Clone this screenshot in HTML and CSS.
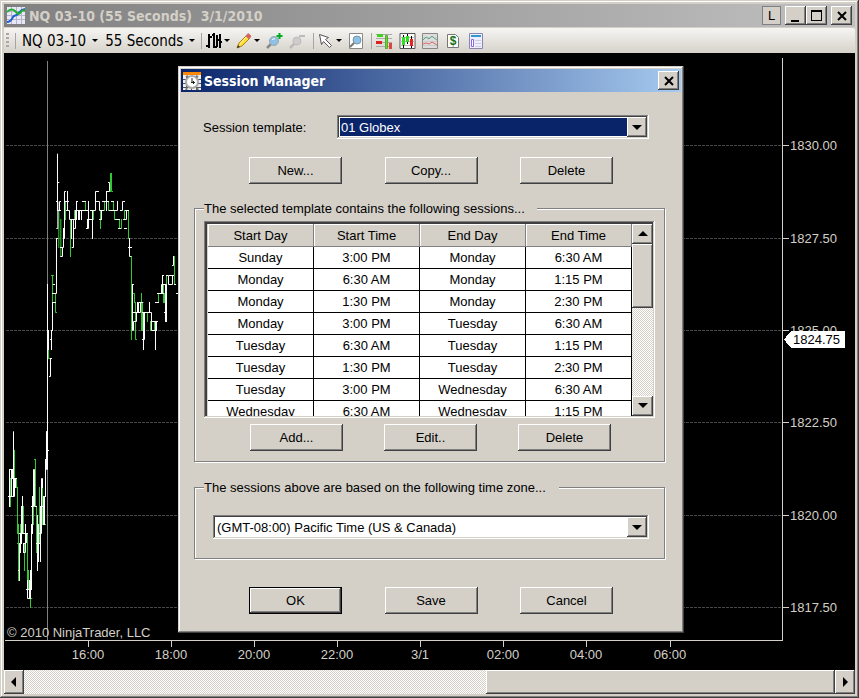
FILE: index.html
```html
<!DOCTYPE html>
<html lang="en">
<head>
<meta charset="utf-8">
<title>NQ 03-10 (55 Seconds) 3/1/2010</title>
<link rel="stylesheet" href="styles.css">
</head>
<body>
<div class="window">
  <header class="titlebar">
    <svg class="app-icon" width="18" height="17" viewBox="0 0 18 17" aria-hidden="true">
      <rect width="18" height="17" fill="#e8e8f4"/>
      <path d="M0 4.500h18M0 8.500h18M0 12.500h18M4.500 0v17M9.500 0v17M14.500 0v17" stroke="#b4b4cc" fill="none"/>
      <path d="M0 15c4 0 5-3 6-5s3-1 5-3 2-4 7-5" stroke="#2060d0" stroke-width="2" fill="none"/>
      <path d="M0 5c3-3 6-3 8-1s3 4 5 2 2-4 5-2" stroke="#20b030" stroke-width="2" fill="none"/>
    </svg>
    <h1 class="title">NQ 03-10 (55 Seconds)&nbsp; 3/1/2010</h1>
    <div class="caption-buttons">
      <button class="link-button" type="button">L</button>
      <span class="caption-pair">
        <button class="caption-button" type="button" aria-label="Minimize"><svg width="16" height="14" viewBox="0 0 16 14"><path d="M3 11h8v2H3z"/></svg></button>
        <button class="caption-button" type="button" aria-label="Maximize"><svg width="16" height="14" viewBox="0 0 16 14"><path d="M2 1h11v11H2zM3 3v8h9V3z" fill-rule="evenodd"/></svg></button>
      </span>
      <button class="caption-button" type="button" aria-label="Close"><svg width="16" height="14" viewBox="0 0 16 14"><path d="M4 3l8 8M12 3l-8 8" stroke="#000" stroke-width="2"/></svg></button>
    </div>
  </header>

  <nav class="toolbar" aria-label="Chart tools">
    <span class="grip"></span>
    <span class="separator"></span>
    <button class="tool tool-text" type="button">NQ 03-10<span class="caret"></span></button>
    <button class="tool tool-text" type="button">55 Seconds<span class="caret"></span></button>
    <span class="separator"></span>
    <button class="tool" type="button" aria-label="Chart style">
      <svg width="16" height="18" viewBox="0 0 16 18"><path d="M3 2v14M0 14h3M3 5h3M8 1v15M8 3H6M8 15h3M11 3v12M14 2v14M12 8h2M14 10h2" stroke="#000" stroke-width="2" fill="none"/></svg><span class="caret"></span>
    </button>
    <button class="tool" type="button" aria-label="Drawing tools">
      <svg width="16" height="18" viewBox="0 0 16 18"><path d="M1 16l2-5 8-8 3 3-8 8z" fill="#fd3" stroke="#b08020"/><path d="M4 12l7-8" stroke="#fff29a"/><path d="M10 4l2-2.500 3 2.500-2 3z" fill="#e55" stroke="#b77"/><path d="M1 16l1-3 2 2z" fill="#333"/></svg><span class="caret"></span>
    </button>
    <button class="tool" type="button" aria-label="Zoom in">
      <svg width="17" height="18" viewBox="0 0 17 18"><path d="M1 16l5-5" stroke="#888" stroke-width="2.500"/><circle cx="8" cy="9" r="4.500" fill="#8fc0e8" stroke="#9aa"/><path d="M6 8q1-2 3-1" stroke="#fff" fill="none"/><path d="M13.500 1v6M10.500 4h6" stroke="#0a2" stroke-width="2"/></svg>
    </button>
    <button class="tool" type="button" aria-label="Zoom out">
      <svg width="17" height="18" viewBox="0 0 17 18"><path d="M1 16l5-5" stroke="#bbb" stroke-width="2.500"/><circle cx="8" cy="9" r="4" fill="#ccc" stroke="#bbb"/><path d="M10 4h6" stroke="#bbb" stroke-width="2"/></svg>
    </button>
    <span class="separator"></span>
    <button class="tool" type="button" aria-label="Pointer">
      <svg width="16" height="18" viewBox="0 0 16 18"><path d="M1.500 2.500l9 3-3 2 6 6-2 2-6-6-2 3z" fill="#fff" stroke="#555"/></svg><span class="caret"></span>
    </button>
    <button class="tool" type="button" aria-label="Preview">
      <svg width="16" height="18" viewBox="0 0 16 18"><path d="M1.500 1.500h13v15h-13z" fill="#fff" stroke="#888"/><circle cx="9" cy="8" r="4" fill="#8fc0e8" stroke="#799"/><path d="M6 11l-4 4" stroke="#777" stroke-width="2"/></svg>
    </button>
    <span class="separator"></span>
    <button class="tool" type="button" aria-label="Market depth">
      <svg width="17" height="18" viewBox="0 0 17 18"><path d="M0 2.500h16M0 6.500h16M0 10.500h16M0 14.500h16" stroke="#aaa"/><path d="M1 2h6v3H1z" fill="#4c2"/><path d="M0 9h6v3H0z" fill="#d22"/><path d="M9.500 3.500h2v13h-2z" fill="#6d2" stroke="#5a3"/><path d="M13 11h3v6h-3z" fill="#d44"/></svg>
    </button>
    <button class="tool" type="button" aria-label="Candlesticks">
      <svg width="17" height="18" viewBox="0 0 17 18"><path d="M1 1.500h15v15H1z" fill="#fff" stroke="#555"/><path d="M1 5.500h15M1 9.500h15M1 13.500h15" stroke="#bbb"/><path d="M4.500 3v13M8.500 2v10M12.500 4v12" stroke="#000"/><path d="M3 5h3v8H3zM7 4h3v6H7z" fill="#3d2"/><path d="M11 7h3v7h-3z" fill="#e22"/></svg>
    </button>
    <button class="tool" type="button" aria-label="Indicators">
      <svg width="17" height="18" viewBox="0 0 17 18"><path d="M.5 1.500h15v15H.5z" fill="#ddd" stroke="#888"/><path d="M1 5.500h14M1 9.500h14M1 13.500h14" stroke="#ccc"/><path d="M1 8l3-3 3 2 3-3 2 2 3 2" stroke="#5a8" fill="none"/><path d="M1 12l3-1 3 1 3-2 5 3" stroke="#d66" fill="none"/></svg>
    </button>
    <button class="tool" type="button" aria-label="Account">
      <svg width="17" height="18" viewBox="0 0 17 18"><path d="M2.500 2.500h8l3 3v10h-11z" fill="#fff" stroke="#777"/><text class="dollar" x="8" y="13">$</text></svg>
    </button>
    <button class="tool" type="button" aria-label="Properties">
      <svg width="16" height="18" viewBox="0 0 16 18"><path d="M1.500 1.500h13v15h-13z" fill="#eef" stroke="#88a"/><path d="M3 3h10v2H3z" fill="#39c"/><path d="M3.500 7.500h2v7h-2z" fill="#fff" stroke="#86e"/><path d="M7 8.500h6M7 11.500h6M7 14.500h6" stroke="#ccd"/></svg>
    </button>
  </nav>

  <main class="workspace">
    <svg class="chart" viewBox="4 53 851 617" preserveAspectRatio="xMinYMin meet" role="img" aria-label="NQ 03-10 price chart">
      <g class="gridlines">
        <path d="M6 145.500H782M6 238.500H782M6 330.500H782M6 422.500H782M6 515.500H782M6 607.500H782"/>
      </g>
      <path class="session-line" d="M47.500 61V640"/>
      <g class="bars" transform="translate(.167 140.167) scale(.33333)">
        <path class="down" d="M176 211V322M182 238V349M196 184V238M211 238V349M223 211V238M256 184V211M280 211V238M301 211V265M313 184V211M325 184V211M331 100V154M334 100V154h3M340 184V211M343 211V238M358 238V265M364 238V265M373 211V238M385 211V295M394 349V598M397 460h6V487M406 487V598h3M424 460V571M427 487V571M442 517V544M451 544V571M463 544V571M475 460V487M490 433V487M493 460V487M499 406V433M523 349V433M157 406V487M154 406h6M166 460V517h3M145 628V655M148 655h3"/>
        <path class="up" d="M172 42V211M175 127h1M169 184h4V265h-3M169 295V460h-12M169 295h3M178 211V184h3M175 211h6M190 265V322h-9M187 322V349h-5M190 295h3V154h3M196 184h9M202 154V211M199 211h9V238h15M220 238V322h-4M214 238V295M226 211V265h-6M229 184V238M229 184h3M226 211h15M235 211V238M238 211V238M244 211V238M244 211h12M247 184h9M259 211h6M265 184V265h-6M262 238V265M262 238h15M277 211V295M271 211h15V154h9M289 184h9V211h12M304 211V238M298 238h6M307 184h6M319 154V211M319 154h9V127h-3M316 184h9M328 211h12M334 184h6M343 211h9V184M346 238h12M355 265h6M361 211h6V184h6M373 265h6M379 211V238H370M376 211h9M388 295V349h4M385 322h9M397 433V571h3V544h9V517M397 433h3M397 517h12M412 487V517h3V487h-3M421 487V517h-9M418 487h10M430 517V628M427 598h6V517M427 517h27V571h15M448 487V517M436 517h6M454 544h18M469 544V571M466 544V628M466 487h9M472 460h12V433h3V406h3M484 460h6M487 406V460M487 433h12V544M496 433V544M493 517h6M499 406h6V433h12V406h3M508 406h9M520 349V376h-3M523 433h3M529 460h3M142 433V720M145 571V628M142 571h3M154 571V628M151 598h3M157 487V571M157 487h9M160 433h3M157 460h9M151 655V709h-3M151 655h3"/>
      </g>
      <g class="bars" transform="translate(.167 380.167) scale(.33333)">
        <path class="down" d="M43 211V295M31 295V379M49 295V322M52 322V460M55 433V601M61 433V517M52 490h9M70 379V460M73 490V571M82 460V601M85 571V628M91 628V682M94 655h1M100 322V433M106 238V379M103 238h3M109 379V517M118 322V490M127 322V433M130 433h6M28 295h3"/>
        <path class="up" d="M40 155V349M28 268V379M28 268h12M25 349h15M34 268V349M37 268V295M43 295V349h-3M46 295V322M46 295h3M58 490V601M55 571h3M61 460V517M64 379V490M67 349V460M58 460h18V433M76 433V517h-6M70 490V517M70 490h6M79 460V487M76 460h6M82 601V655h9V571M88 601V655M79 628h12M94 433V628M94 571V628M97 349V460M94 379h6V268h3V379h6M112 406V571M115 433V544M109 490h12M121 379V544M115 460h9V295h3V322M121 379h12V433M130 349V433M133 349V433M133 349h3V238h3V155M136 238V349M139 155V268h3V0M142 211h3"/>
      </g>
      <path class="axis" d="M5 640.500H782.500V58M782 145.500h7M782 238.500h7M782 330.500h7M782 422.500h7M782 515.500h7M782 607.500h7M88.500 640v7M171.500 640v7M254.500 640v7M337.500 640v7M420.500 640v7M503.500 640v7M586.500 640v7M670.500 640v7"/>
      <g class="axis-label">
        <text x="790" y="150">1830.00</text>
        <text x="790" y="243">1827.50</text>
        <text x="790" y="335">1825.00</text>
        <text x="790" y="427">1822.50</text>
        <text x="790" y="520">1820.00</text>
        <text x="790" y="612">1817.50</text>
        <text x="7" y="637">© 2010 NinjaTrader, LLC</text>
      </g>
      <g class="axis-label time-label">
        <text x="88" y="659">16:00</text>
        <text x="171" y="659">18:00</text>
        <text x="254" y="659">20:00</text>
        <text x="337" y="659">22:00</text>
        <text x="420" y="659">3/1</text>
        <text x="503" y="659">02:00</text>
        <text x="586" y="659">04:00</text>
        <text x="670" y="659">06:00</text>
      </g>
      <path d="M784 339.500l7-8.500h54v17h-54z" fill="#fff"/>
      <text class="price-marker" x="793" y="344">1824.75</text>
    </svg>
  </main>

  <div class="scrollbar scrollbar-h" aria-hidden="true">
    <span class="scroll-button"><svg width="8" height="10" viewBox="0 0 8 10"><path d="M6 0v10L1 5z"/></svg></span>
    <span class="scroll-track"><span class="scroll-thumb"></span></span>
    <span class="scroll-button"><svg width="8" height="10" viewBox="0 0 8 10"><path d="M2 0v10l5-5z"/></svg></span>
  </div>
</div>

<section class="dialog" role="dialog" aria-labelledby="dialog-title">
  <header class="dialog-titlebar">
    <svg width="18" height="18" viewBox="0 0 18 18" aria-hidden="true">
      <rect width="18" height="18" fill="#eee"/>
      <path d="M0 7.500h18M0 11.500h18M0 15.500h18M3.500 4v14M8.500 4v14M13.500 4v14" stroke="#555"/>
      <rect width="18" height="3" fill="#f80"/>
      <circle cx="9" cy="10" r="6" fill="#fff" stroke="#aaa" stroke-width="2"/>
      <path d="M9 6v5M8 10.500h4M10.500 9v3" stroke="#222" fill="none"/>
      <path d="M4 16l-1 2M14 16l1 2M3 5l2-1M15 5l-2-1" stroke="#777" stroke-width="2"/>
    </svg>
    <h2 class="title" id="dialog-title">Session Manager</h2>
    <button class="caption-button" type="button" aria-label="Close"><svg width="16" height="14" viewBox="0 0 16 14"><path d="M4 3l8 8M12 3l-8 8" stroke="#000" stroke-width="2"/></svg></button>
  </header>

  <form class="dialog-body">
    <div class="template-row">
      <label for="template">Session template:</label>
      <span class="combo combo-selected">
        <select id="template"><option>01 Globex</option></select>
        <span class="combo-arrow"></span>
      </span>
    </div>

    <div class="button-row">
      <button class="button" type="button">New...</button>
      <button class="button" type="button">Copy...</button>
      <button class="button" type="button">Delete</button>
    </div>

    <fieldset class="group group-sessions">
      <legend class="legend-sessions">The selected template contains the following sessions...</legend>
      <div class="grid-box">
        <div class="grid-view">
          <table class="sessions">
            <thead>
              <tr><th>Start Day</th><th>Start Time</th><th>End Day</th><th>End Time</th></tr>
            </thead>
            <tbody>
              <tr><td>Sunday</td><td>3:00 PM</td><td>Monday</td><td>6:30 AM</td></tr>
              <tr><td>Monday</td><td>6:30 AM</td><td>Monday</td><td>1:15 PM</td></tr>
              <tr><td>Monday</td><td>1:30 PM</td><td>Monday</td><td>2:30 PM</td></tr>
              <tr><td>Monday</td><td>3:00 PM</td><td>Tuesday</td><td>6:30 AM</td></tr>
              <tr><td>Tuesday</td><td>6:30 AM</td><td>Tuesday</td><td>1:15 PM</td></tr>
              <tr><td>Tuesday</td><td>1:30 PM</td><td>Tuesday</td><td>2:30 PM</td></tr>
              <tr><td>Tuesday</td><td>3:00 PM</td><td>Wednesday</td><td>6:30 AM</td></tr>
              <tr><td>Wednesday</td><td>6:30 AM</td><td>Wednesday</td><td>1:15 PM</td></tr>
            </tbody>
          </table>
        </div>
        <div class="scrollbar scrollbar-v" aria-hidden="true">
          <span class="scroll-button"><svg width="10" height="6" viewBox="0 0 10 6"><path d="M5 0l5 5H0z"/></svg></span>
          <span class="scroll-track"><span class="scroll-thumb"></span></span>
          <span class="scroll-button"><svg width="10" height="6" viewBox="0 0 10 6"><path d="M0 0h10L5 5z"/></svg></span>
        </div>
      </div>
      <div class="button-row group-buttons">
        <button class="button" type="button">Add...</button>
        <button class="button" type="button">Edit..</button>
        <button class="button" type="button">Delete</button>
      </div>
    </fieldset>

    <fieldset class="group group-zone">
      <legend class="legend-zone"><label for="zone">The sessions above are based on the following time zone...</label></legend>
      <div class="combo">
        <select id="zone"><option>(GMT-08:00) Pacific Time (US &amp; Canada)</option></select>
        <span class="combo-arrow"></span>
      </div>
    </fieldset>

    <div class="button-row">
      <button class="button button-default" type="button">OK</button>
      <button class="button" type="button">Save</button>
      <button class="button" type="button">Cancel</button>
    </div>
  </form>
</section>
</body>
</html>
```
FILE: styles.css
```css
:root {
  --face: #d4d0c8;
  --shadow: #808080;
  --dark: #404040;
  --navy: #0a246a;
  --ui: "Liberation Sans", Arial, sans-serif;
  --caption: "DejaVu Sans Condensed", "DejaVu Sans", sans-serif;
}

* { box-sizing: border-box; }

body {
  margin: 0;
  position: relative;
  background: var(--face);
  color: #000;
  font: 13px/15px var(--ui);
}

button, select {
  margin: 0;
  padding: 0;
  border: 0;
  border-radius: 0;
  color: inherit;
  font: inherit;
}

svg { display: block; flex: none; }

/* Raised 3D edge shared by windows, buttons and scroll parts */
.window, .dialog, .button, .caption-button, .scroll-button, .scroll-thumb, .combo-arrow {
  background: var(--face);
  box-shadow: inset -1px -1px var(--dark), inset 1px 1px #fff, inset -2px -2px var(--shadow);
}

/* Main window */
.window {
  display: flex;
  flex-direction: column;
  min-height: 100vh;
  padding: 4px;
  box-shadow: inset -1px -1px var(--dark), inset 1px 1px var(--face), inset -2px -2px var(--shadow), inset 2px 2px #fff;
}

.titlebar {
  display: flex;
  align-items: center;
  gap: 4px;
  height: 23px;
  padding: 0 3px;
  background: linear-gradient(90deg, #808080, #c0c0c0);
}

.title {
  flex: 1;
  margin: 0;
  font: bold 14px/18px var(--caption);
  white-space: nowrap;
}

.titlebar .title { color: var(--face); }

.caption-buttons { display: flex; gap: 4px; }
.caption-pair { display: flex; }

.caption-button, .link-button {
  display: flex;
  align-items: center;
  justify-content: center;
  width: 21px;
  height: 19px;
}

.link-button {
  width: 19px;
  border: 1px solid var(--shadow);
  background: var(--face);
}

/* Toolbar */
.toolbar {
  display: flex;
  align-items: center;
  height: 26px;
  padding: 0 2px;
  border-radius: 0 3px 3px 0;
  border-top: 1px solid var(--face);
  background: linear-gradient(#f6f5f3, #d6d2ca);
}

.grip {
  width: 3px;
  height: 15px;
  margin-right: 5px;
  background: repeating-linear-gradient(#a8a8a8 0 2px, transparent 2px 4px);
}

.separator {
  width: 1px;
  height: 16px;
  margin: 0 4px 0 1px;
  background: #a5a5a5;
}

.tool {
  display: flex;
  align-items: center;
  gap: 2px;
  margin-right: 6px;
  background: none;
}

.tool-text {
  gap: 6px;
  margin: 0 5px 0 2px;
  font: 15px/20px var(--caption);
  white-space: nowrap;
}

.caret {
  border: solid transparent;
  border-width: 3px 3px 0;
  border-top-color: #000;
}

.dollar {
  fill: #177017;
  font: bold 12px var(--ui);
  text-anchor: middle;
}

/* Chart */
.workspace {
  display: flex;
  flex: 1;
  min-height: 0;
  background: #000;
}

.chart { flex: 1; width: 100%; }
.chart path { shape-rendering: crispEdges; }
.gridlines path { stroke: #484848; stroke-dasharray: 3 1; }
.session-line { stroke: #808080; }
.axis { fill: none; stroke: var(--face); }
.axis-label { fill: var(--face); font: 13px var(--ui); }
.time-label { text-anchor: middle; }
.price-marker { fill: #000; font: 13px var(--ui); }
.bars path { fill: none; stroke-width: 3; stroke-linecap: square; }
.up { stroke: #fff; }
.down { stroke: #32cd32; }

/* Scrollbars */
.scrollbar { display: flex; }

.scroll-button {
  display: flex;
  flex: none;
  align-items: center;
  justify-content: center;
}

.scroll-track {
  display: flex;
  flex: 1;
  background: repeating-conic-gradient(#fff 0 25%, var(--face) 0 50%) 0 0 / 2px 2px;
}

.scrollbar-h { height: 24px; }
.scrollbar-h .scroll-button { width: 20px; }
.scrollbar-h .scroll-track { justify-content: flex-end; }
.scrollbar-h .scroll-thumb { width: 43%; }

.scrollbar-v { flex-direction: column; width: 21px; }
.scrollbar-v .scroll-button { height: 20px; }
.scrollbar-v .scroll-thumb { width: 100%; height: 42%; }

/* Session Manager dialog */
.dialog {
  position: absolute;
  top: 66px;
  left: 178px;
  width: 506px;
  padding: 3px;
  box-shadow: inset -1px -1px var(--dark), inset 1px 1px var(--face), inset -2px -2px var(--shadow), inset 2px 2px #fff;
}

.dialog-titlebar {
  display: flex;
  align-items: center;
  gap: 3px;
  height: 23px;
  padding: 0 2px;
  background: linear-gradient(90deg, var(--navy), #a6caf0);
  color: #fff;
}

.dialog-body { padding: 23px 16px 16px 13px; }

.template-row {
  display: flex;
  align-items: center;
  justify-content: space-between;
  padding: 0 16px 0 9px;
}

.template-row .combo { width: 312px; }

.combo {
  display: grid;
  height: 24px;
  padding: 2px;
  background: #fff;
  box-shadow: inset -1px -1px #fff, inset 1px 1px var(--shadow), inset -2px -2px var(--face), inset 2px 2px var(--dark);
}

.combo select {
  grid-area: 1 / 1;
  width: 100%;
  padding-left: 2px;
  appearance: none;
  background: #fff;
}

.combo-selected select {
  border: 1px solid #fff;
  padding-left: 1px;
  background: var(--navy);
  color: #fff;
}

.combo-arrow {
  display: flex;
  grid-area: 1 / 1;
  align-items: center;
  justify-content: center;
  justify-self: end;
  width: 20px;
  pointer-events: none;
}

.combo-arrow::after {
  content: "";
  border: solid transparent;
  border-width: 5px 5px 0;
  border-top-color: #000;
}

.button-row {
  display: flex;
  justify-content: space-between;
  margin: 18px 52px 0 55px;
}

.button { width: 93px; height: 27px; }

.button-default { border: 1px solid #000; }

.group {
  min-width: 0;
  margin: 17px 0 0;
  padding: 0 9px;
  border: 1px solid var(--shadow);
  box-shadow: 1px 1px #fff, inset 1px 1px #fff;
}

.group legend {
  padding: 0;
  background: var(--face);
}

.legend-sessions { width: 333px; }
.legend-zone { width: 355px; margin-left: -9px; }

.grid-box {
  display: flex;
  height: 197px;
  margin-top: 5px;
  padding: 3px 2px 2px 4px;
  box-shadow: inset -1px -1px #fff, inset 1px 1px var(--shadow), inset -2px -2px var(--face), inset 3px 3px var(--dark);
}

.grid-view {
  flex: 1;
  overflow: hidden;
  background: #fff;
}

.sessions {
  width: 100%;
  border-spacing: 0;
  table-layout: fixed;
  text-align: center;
}

.sessions th {
  height: 23px;
  padding: 0;
  border-right: 1px solid var(--shadow);
  border-bottom: 1px solid var(--shadow);
  background: var(--face);
  box-shadow: inset 1px 1px #fff;
  font-weight: normal;
}

.sessions td {
  height: 22px;
  padding: 0;
  border-right: 1px solid #000;
  border-bottom: 1px solid #000;
}

.group-buttons { margin: 6px 44px 10px 46px; }

.group-zone { margin-top: 18px; padding: 0 15px 19px 18px; }
.group-zone .combo { margin-top: 20px; }
.group-zone + .button-row { margin-top: 28px; }
```
